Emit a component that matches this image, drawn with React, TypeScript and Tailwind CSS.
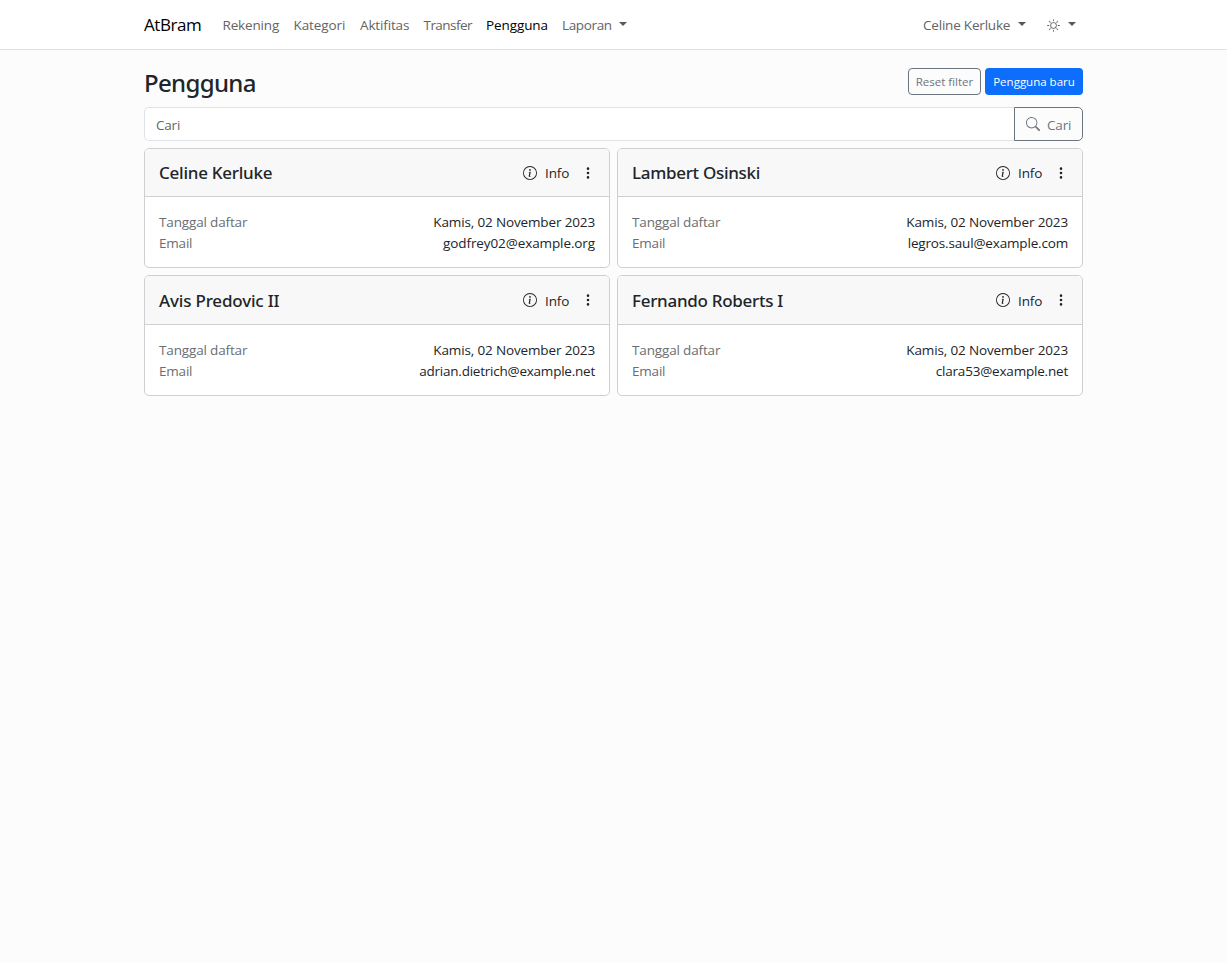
import { BsInfoCircle, BsSearch, BsSun, BsThreeDotsVertical } from "react-icons/bs";

const navItems = [
  { label: "Rekening", box: "w-[71px] tracking-[-0.15px]" },
  { label: "Kategori", box: "w-[66.5px] tracking-[-0.1px]" },
  { label: "Aktifitas", box: "w-[63.5px] tracking-[-0.15px]" },
  { label: "Transfer", box: "w-[62.5px] tracking-[-0.55px]" },
  { label: "Pengguna", box: "w-[76px] tracking-[-0.1px]", active: true },
  { label: "Laporan", box: "w-[57px] tracking-[-0.35px]" },
];

const users = [
  { name: "Celine Kerluke", email: "godfrey02@example.org", title: "pt-px tracking-[-0.25px]", mail: "tracking-[-0.1px]", head: "h-[48px]", height: "h-[120px]" },
  { name: "Lambert Osinski", email: "legros.saul@example.com", title: "pt-px tracking-[-0.3px]", mail: "tracking-[-0.17px]", head: "h-[48px]", height: "h-[120px]" },
  { name: "Avis Predovic II", email: "adrian.dietrich@example.net", title: "pt-[2px] tracking-[-0.18px]", mail: "tracking-[-0.23px]", head: "h-[49px]", height: "h-[121px]" },
  { name: "Fernando Roberts I", email: "clara53@example.net", title: "pt-[2px] tracking-[-0.28px]", mail: "tracking-[-0.2px]", head: "h-[49px]", height: "h-[121px]" },
];

function Caret() {
  return <span className="-mt-px block h-0 w-0 border-x-4 border-t-4 border-x-transparent border-t-[#595959]" />;
}

function UserCard({ user }: { user: (typeof users)[number] }) {
  return (
    <article className={`${user.height} overflow-hidden rounded-[5px] border border-[#cecfd0] bg-white`}>
      <header className={`${user.head} flex items-center justify-between border-b border-[#cecfd0] bg-[#f8f8f8] pr-[17px] pl-[14px]`}>
        <h2 className={`${user.title} font-['Noto_Sans','Open_Sans',sans-serif] text-[17px] font-medium`}>{user.name}</h2>
        <div className="flex items-center">
          <BsInfoCircle className="size-[14px]" />
          <span className="ml-2 w-[36px] pt-[2px] text-[13.5px] tracking-[-0.1px]">Info</span>
          <BsThreeDotsVertical className="size-[14px] -mr-[3px]" />
        </div>
      </header>
      <dl className="px-[14px] pt-[15px] text-[13.5px] leading-[21px]">
        <div className="flex justify-between">
          <dt className="tracking-[-0.15px] text-[#6a6e72]">Tanggal daftar</dt>
          <dd className="tracking-[-0.14px]">Kamis, 02 November 2023</dd>
        </div>
        <div className="flex justify-between">
          <dt className="tracking-[-0.2px] text-[#6a6e72]">Email</dt>
          <dd className={user.mail}>{user.email}</dd>
        </div>
      </dl>
    </article>
  );
}

export default function App() {
  return (
    <div className="min-h-screen bg-[#fcfcfc] font-['Open_Sans',sans-serif] text-[#212529]">
      <nav className="h-[50px] border-b border-[#dee2e6] bg-white">
        <div className="mx-auto flex h-[49px] w-[939px] items-center text-[13.5px] whitespace-nowrap text-[#646464]">
          <span className="w-[78.5px] text-[17px] tracking-[-0.45px] text-black">AtBram</span>
          {navItems.map((item) => (
            <a key={item.label} className={`pt-[2px] ${item.box} ${item.active ? "text-black" : ""}`}>
              {item.label}
            </a>
          ))}
          <Caret />
          <span className="ml-auto w-[95px] pt-[2px] tracking-[-0.2px]">Celine Kerluke</span>
          <Caret />
          <BsSun className="mt-px mr-2 ml-[21px] size-[13px]" />
          <Caret />
          <span className="w-[7px]" />
        </div>
      </nav>
      <main className="mx-auto w-[939px] pt-[18px]">
        <div className="flex h-[39px] items-start justify-between">
          <h1 className="font-['Noto_Sans','Open_Sans',sans-serif] text-[24px] leading-[30px] font-medium tracking-[-0.65px]">Pengguna</h1>
          <div className="flex gap-1 text-[11.5px] whitespace-nowrap">
            <button className="h-[27px] w-[73px] rounded-[4px] border border-[#6c757d] text-[#6c757d]">Reset filter</button>
            <button className="h-[27px] w-[98px] rounded-[4px] bg-[#0d6efd] text-white">Pengguna baru</button>
          </div>
        </div>
        <form className="flex h-[34px] text-[13.5px]">
          <input
            placeholder="Cari"
            className="min-w-0 flex-1 rounded-l-[5px] border border-r-0 border-[#dee2e6] bg-white px-[11px] pt-[2px] tracking-[-0.2px] placeholder:text-[#62666a]"
          />
          <button type="button" className="flex w-[69px] items-center rounded-r-[5px] border border-[#6c757d] pl-[11px] text-[#6c757d]">
            <BsSearch className="size-[14px]" />
            <span className="ml-[7px] pt-[2px] tracking-[-0.15px]">Cari</span>
          </button>
        </form>
        <section className="mt-[7px] grid grid-cols-2 gap-[7px]">
          {users.map((user) => (
            <UserCard key={user.name} user={user} />
          ))}
        </section>
      </main>
    </div>
  );
}
